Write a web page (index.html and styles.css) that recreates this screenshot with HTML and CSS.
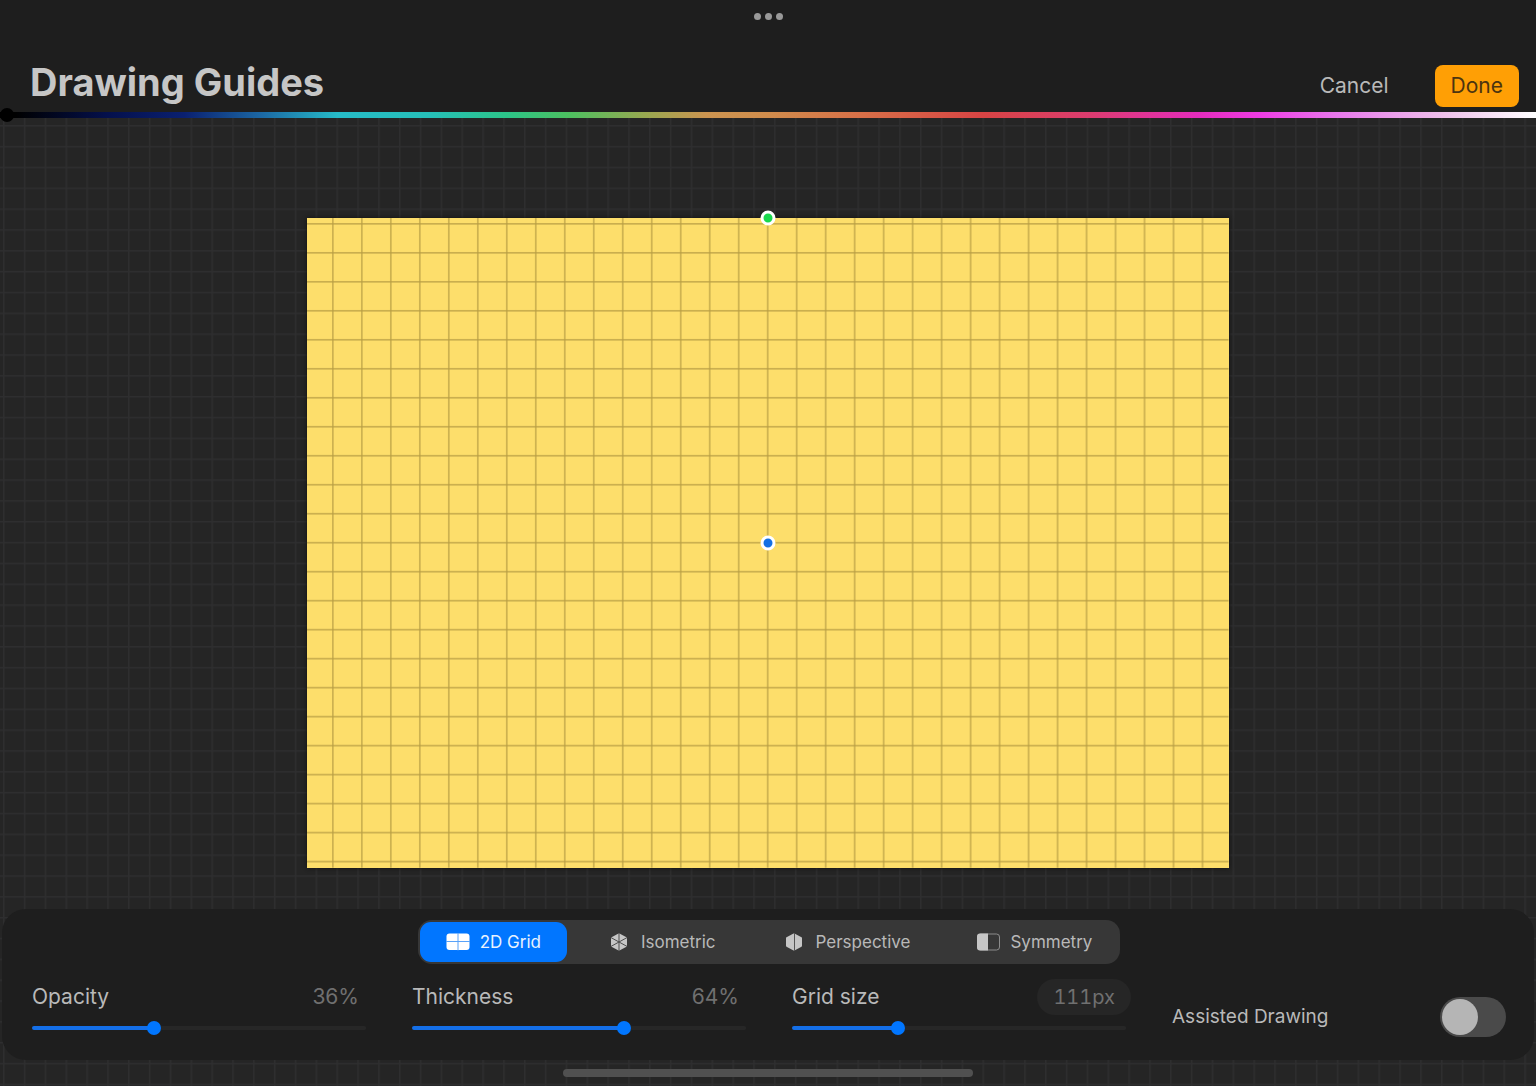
FILE: index.html
```html
<!DOCTYPE html>
<html lang="en">
<head>
<meta charset="utf-8">
<meta name="viewport" content="width=device-width, initial-scale=1">
<title>Drawing Guides</title>
<link rel="stylesheet" href="styles.css">
</head>
<body>
<svg class="backdrop" aria-hidden="true">
  <defs>
    <pattern id="backdrop-grid" width="20.84" height="20.84" patternUnits="userSpaceOnUse" x="3" y="0">
      <path d="M.5 0V20.84M0 .5H20.84" stroke="#2e2e2f" stroke-width="2" fill="none"/>
    </pattern>
  </defs>
  <rect width="100%" height="100%" fill="url(#backdrop-grid)"/>
</svg>

<header class="topbar">
  <button class="more" type="button" aria-label="Window options"><i></i><i></i><i></i></button>
  <div class="titlebar">
    <h1 class="title">Drawing Guides</h1>
    <div class="actions">
      <button class="btn" type="button">Cancel</button>
      <button class="btn btn-primary" type="button">Done</button>
    </div>
  </div>
  <input class="hue" type="range" min="0" max="100" value="0" aria-label="Guide color">
</header>

<main class="stage">
  <div class="canvas">
    <svg class="guides" viewBox="0 0 922 650" aria-hidden="true">
      <defs>
        <pattern id="guide-grid" width="29" height="29" patternUnits="userSpaceOnUse" x="25" y="5">
          <path d="M.9 0V29M0 .9H29" stroke="#3c2c00" stroke-opacity=".36" stroke-width="1.2" fill="none"/>
        </pattern>
      </defs>
      <rect width="922" height="650" fill="url(#guide-grid)"/>
    </svg>
    <button class="node node-rotate" type="button" aria-label="Rotate grid"></button>
    <button class="node node-move" type="button" aria-label="Move grid"></button>
  </div>
</main>

<section class="panel" aria-label="Guide settings">
  <div class="segments" role="radiogroup" aria-label="Guide type">
    <label class="segment">
      <input type="radio" name="guide" checked>
      <svg width="24" height="20" viewBox="0 0 24 20"><rect x="0.5" y="1.5" width="23" height="16.5" rx="3" fill="#fff"/><path d="M12 1V18.5M0 9.5H24" stroke="#5aa2f8" stroke-width="1"/></svg>
      <span>2D Grid</span>
    </label>
    <label class="segment">
      <input type="radio" name="guide">
      <svg width="24" height="20" viewBox="0 0 24 20"><path d="M12 2.4 19 6.2V13.8L12 17.6 5 13.8V6.2Z" fill="#c6c6c6" stroke="#c6c6c6" stroke-width="2" stroke-linejoin="round"/><path d="M12 1V19M4 5.6 20 14.4M20 5.6 4 14.4" stroke="#4c4c4c" stroke-width="1"/></svg>
      <span>Isometric</span>
    </label>
    <label class="segment">
      <input type="radio" name="guide">
      <svg width="24" height="20" viewBox="0 0 24 20"><path d="M12 2.4 19 6.2V13.8L12 17.6 5 13.8V6.2Z" fill="#c6c6c6" stroke="#c6c6c6" stroke-width="2" stroke-linejoin="round"/><path d="M12.5 1V19" stroke="#555" stroke-width="1"/></svg>
      <span>Perspective</span>
    </label>
    <label class="segment">
      <input type="radio" name="guide">
      <svg width="24" height="20" viewBox="0 0 24 20"><rect x="1.5" y="2" width="22" height="16" rx="3" fill="none" stroke="#8c8c8c" stroke-width="1"/><path d="M4 1.5H12V18.5H4A3 3 0 0 1 1 15.5V4.5A3 3 0 0 1 4 1.5Z" fill="#c6c6c6"/></svg>
      <span>Symmetry</span>
    </label>
  </div>

  <div class="settings">
    <div class="setting">
      <div class="setting-head">
        <label for="opacity">Opacity</label>
        <output for="opacity">36%</output>
      </div>
      <input class="slider" id="opacity" type="range" min="0" max="100" value="36" style="--fill: 36%">
    </div>
    <div class="setting">
      <div class="setting-head">
        <label for="thickness">Thickness</label>
        <output for="thickness">64%</output>
      </div>
      <input class="slider" id="thickness" type="range" min="0" max="100" value="64" style="--fill: 64%">
    </div>
    <div class="setting">
      <div class="setting-head">
        <label for="size">Grid size</label>
        <button class="pill" type="button">111px</button>
      </div>
      <input class="slider" id="size" type="range" min="0" max="100" value="31" style="--fill: 31%">
    </div>
    <label class="assist">
      <span>Assisted Drawing</span>
      <input class="switch" type="checkbox" role="switch">
    </label>
  </div>
</section>
<div class="home-indicator"></div>
</body>
</html>
```
FILE: styles.css
```css
* {
  box-sizing: border-box;
}

body {
  position: relative;
  display: flex;
  flex-direction: column;
  min-height: 100vh;
  margin: 0;
  background: #252525;
  color: #b9b9b9;
  font: 21px/24px Inter, "Liberation Sans", sans-serif;
}

button,
input {
  margin: 0;
  padding: 0;
  border: 0;
  background: none;
  color: inherit;
  font: inherit;
}

/* Faint grid that runs behind the whole window */
.backdrop {
  position: absolute;
  inset: 0;
  z-index: -1;
  width: 100%;
  height: 100%;
}

/* Top bar */
.topbar {
  display: flex;
  flex-direction: column;
  background: #1e1e1e;
}

.more {
  display: flex;
  align-items: center;
  align-self: center;
  gap: 4px;
  height: 32px;
}

.more i {
  width: 7px;
  height: 7px;
  border-radius: 50%;
  background: #999;
}

.titlebar {
  display: flex;
  align-items: flex-end;
  justify-content: space-between;
  height: 80px;
  padding: 0 17px 5px 30px;
}

.title {
  margin: 0;
  color: #c6c6c6;
  font-size: 38px;
  font-weight: 700;
  line-height: 50px;
}

.actions {
  display: flex;
  gap: 30px;
}

.btn {
  height: 42px;
  padding: 0 16px;
  border-radius: 8px;
}

.btn-primary {
  background: #ff9f05;
  color: #4c3410;
}

.hue {
  display: block;
  width: 100%;
  height: 6px;
  appearance: none;
  background: linear-gradient(90deg, #000 1%, #04104c 7%, #0a2070 12%, #1c68a4 17%, #26bcc8 22%, #26c0b8 28%, #2cc488 33%, #4cc060 37%, #98a850 42%, #cc9450 46%, #d08c4c 50%, #d87048 56%, #d84444 64%, #dc3c70 71%, #e42cbc 78%, #ee3ce4 82%, #e878ec 87%, #eec0ea 94%, #fff 100%);
}

.hue::-webkit-slider-thumb {
  width: 14px;
  height: 14px;
  appearance: none;
  border-radius: 50%;
  background: #000;
}

/* Drawing canvas */
.stage {
  display: flex;
  flex: 1;
  align-items: center;
  justify-content: center;
  padding: 59px 0 0;
}

.canvas {
  position: relative;
  width: 60%;
  background: #fdde6b;
  box-shadow: 0 0 4px #111;
}

.guides {
  display: block;
  width: 100%;
}

.node {
  position: absolute;
  left: 50%;
  width: 15px;
  height: 15px;
  border: 3px solid #fff;
  border-radius: 50%;
  transform: translate(-50%, -50%);
}

.node-rotate {
  top: 0;
  background: #18d84c;
}

.node-move {
  top: 50%;
  background: #1470e4;
}

/* Settings panel */
.panel {
  display: flex;
  flex-direction: column;
  gap: 15px;
  margin: 0 2px;
  padding: 11px 28px 23px 30px;
  border-radius: 24px;
  background: #1e1e1e;
}

.segments {
  display: flex;
  align-self: center;
  gap: 14px;
  padding: 2px;
  border-radius: 14px;
  background: #373737;
  font-size: 17px;
}

.segment {
  display: flex;
  align-items: center;
  gap: 10px;
  height: 40px;
  padding: 0 26px;
  border-radius: 11px;
}

.segment:has(:checked) {
  background: #0176ff;
  color: #e8f2ff;
}

.segment input {
  position: absolute;
  opacity: 0;
}

.settings {
  display: grid;
  grid-template-columns: repeat(4, 1fr);
  gap: 46px;
}

.setting {
  display: flex;
  flex-direction: column;
  gap: 6px;
  padding-bottom: 2px;
}

.setting-head {
  display: flex;
  align-items: center;
  justify-content: space-between;
  height: 36px;
}

.setting-head output {
  padding-right: 7px;
  color: #707070;
}

.pill {
  height: 36px;
  margin-right: -5px;
  padding: 0 16px;
  border-radius: 18px;
  background: #262626;
  color: #707070;
  font-size: 20px;
  font-variant-numeric: tabular-nums;
}

.slider {
  width: 100%;
  height: 14px;
  appearance: none;
}

.slider::-webkit-slider-runnable-track {
  height: 4px;
  border-radius: 2px;
  background: linear-gradient(90deg, #146fe8 var(--fill), #272727 var(--fill));
}

.slider::-webkit-slider-thumb {
  width: 14px;
  height: 14px;
  margin-top: -5px;
  appearance: none;
  border-radius: 50%;
  background: #0176ff;
}

.assist {
  display: flex;
  align-items: center;
  align-self: end;
  justify-content: space-between;
  font-size: 19px;
}

.switch {
  width: 66px;
  height: 40px;
  padding: 2px;
  appearance: none;
  border-radius: 20px;
  background: #4a4a4a;
}

.switch::before {
  display: block;
  width: 36px;
  height: 36px;
  border-radius: 50%;
  background: #b5b5b5;
  content: "";
}

.switch:checked::before {
  margin-left: auto;
}

.home-indicator {
  align-self: center;
  width: 410px;
  height: 8px;
  margin: 9px 0;
  border-radius: 4px;
  background: #505050;
}
```
